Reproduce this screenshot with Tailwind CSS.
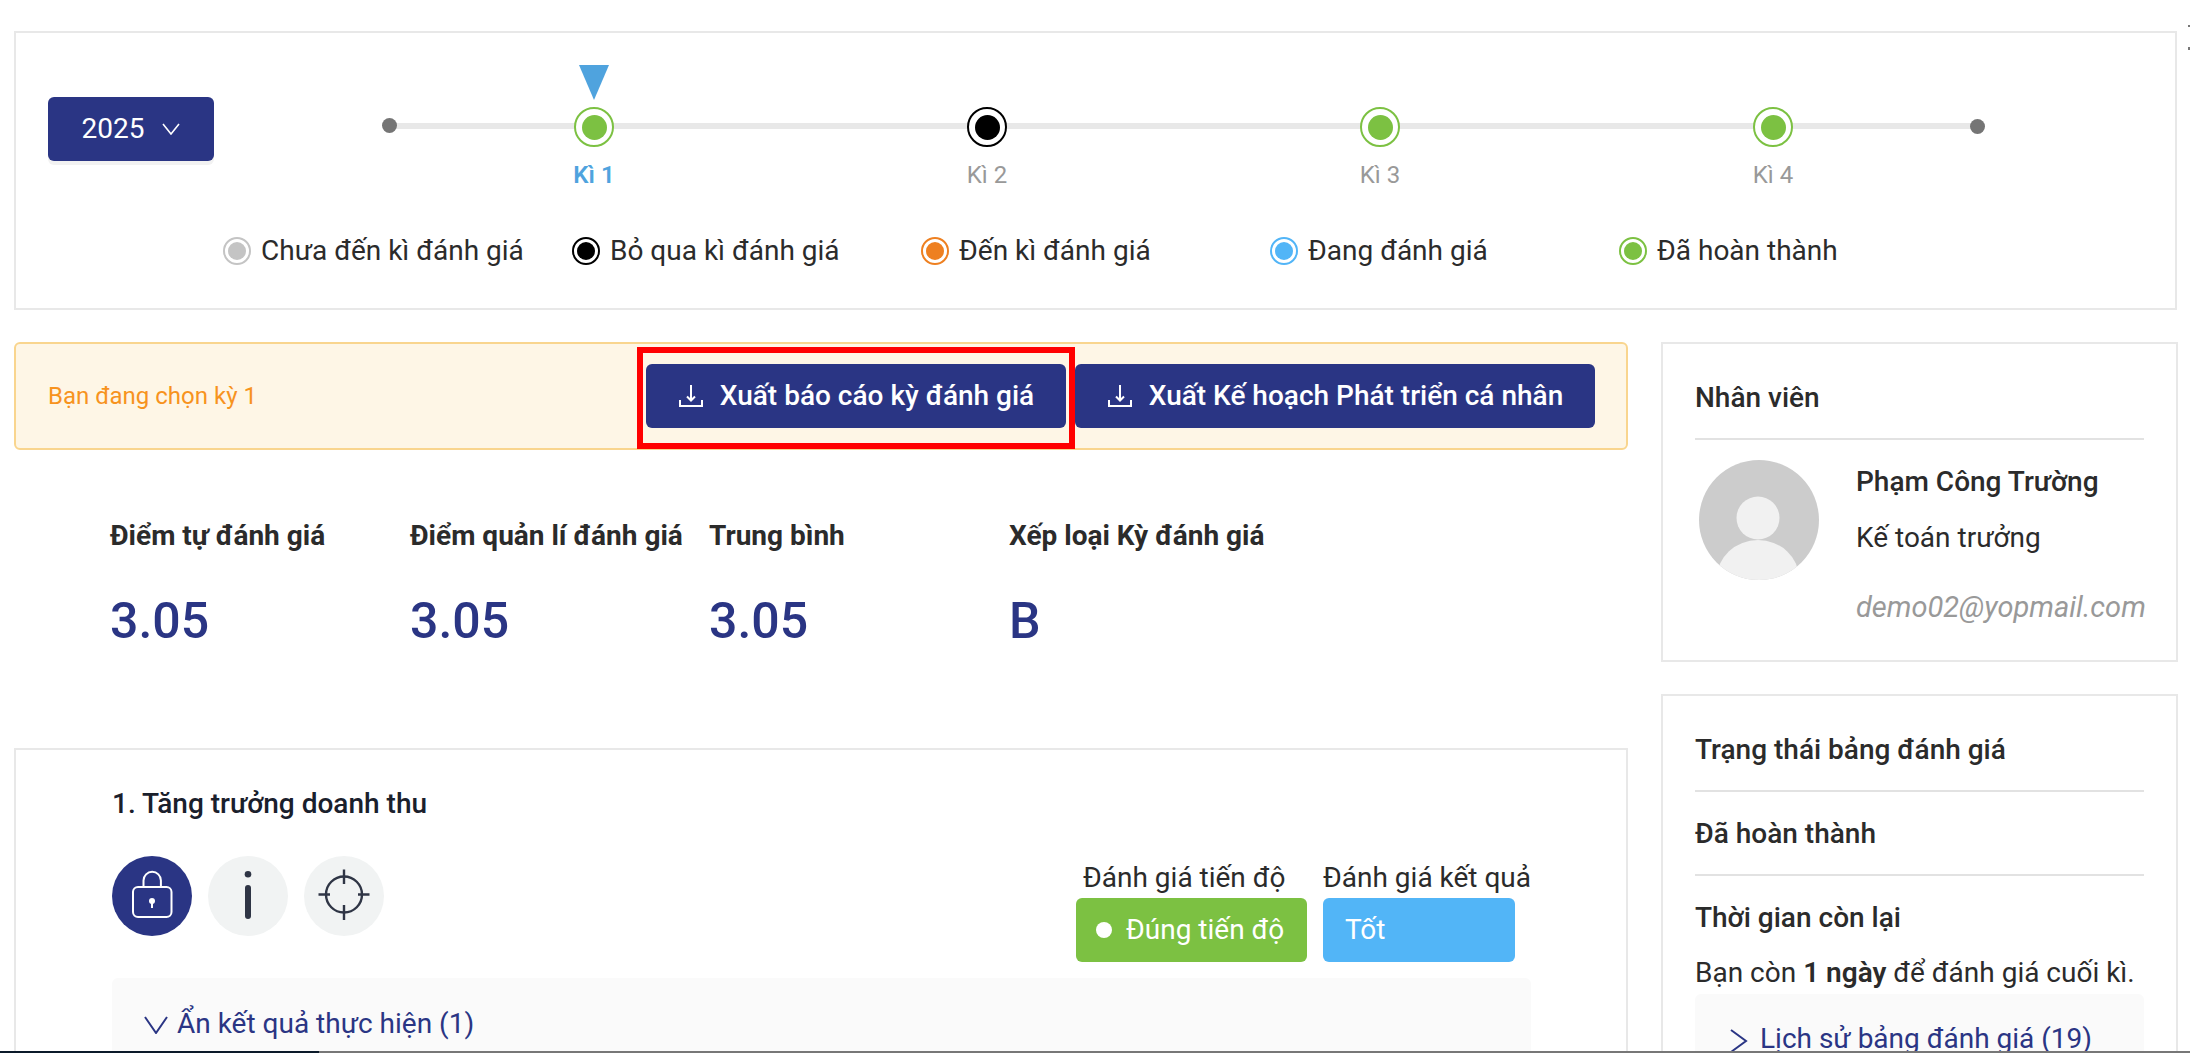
<!DOCTYPE html>
<html lang="en">
<head>
<meta charset="UTF-8">
<meta name="viewport" content="width=device-width, initial-scale=1.0">
<title>Đánh giá</title>
<script src="https://cdn.jsdelivr.net/npm/@tailwindcss/browser@4"></script>
</head>
<body class="bg-white font-['Roboto',sans-serif] text-[#2b2b2b] h-[1053px] overflow-hidden relative">

<div class="pl-[14px] pt-[31px] w-[2178px]">

    <!-- year + timeline -->
    <section class="border-2 border-[#e8e8e8] h-[279px] w-[2163px]">
        <div class="flex pt-[32px] pl-[32px] h-[161px]">
            <button class="w-[166px] h-[64px] mt-[32px] rounded-md bg-[#2a3584] text-white text-[28px] flex items-center justify-center gap-[18px] shadow-[0_4px_0_#f2f2f2]">
                2025
                <svg width="18" height="12" viewBox="0 0 18 12" fill="none" stroke="white" stroke-width="1.6"><path d="M1 1l8 10 8-10"/></svg>
            </button>
            <div class="relative flex items-start ml-[168px] mt-[42px]">
                <div class="absolute left-[4px] right-[4px] top-[16px] h-[6px] bg-[#e8e8e8]"></div>
                <span class="relative w-[15px] h-[15px] rounded-full bg-[#757575] mt-[11px]"></span>
                <div class="relative w-[40px] ml-[177px] flex flex-col items-center">
                    <span class="absolute top-[-42px] w-0 h-0 border-x-[15px] border-x-transparent border-t-[35px] border-t-[#4fa3de]"></span>
                    <span class="w-[40px] h-[40px] rounded-full border-2 border-[#7cc142] bg-white flex items-center justify-center"><span class="w-[25px] h-[25px] rounded-full bg-[#7cc142]"></span></span>
                    <span class="mt-[14px] text-[24px] leading-[28px] font-semibold text-[#4fa3de] whitespace-nowrap">Kì 1</span>
                </div>
                <div class="relative w-[40px] ml-[353px] flex flex-col items-center">
                    <span class="w-[40px] h-[40px] rounded-full border-2 border-black bg-white flex items-center justify-center"><span class="w-[25px] h-[25px] rounded-full bg-black"></span></span>
                    <span class="mt-[14px] text-[24px] leading-[28px] text-[#999999] whitespace-nowrap">Kì 2</span>
                </div>
                <div class="relative w-[40px] ml-[353px] flex flex-col items-center">
                    <span class="w-[40px] h-[40px] rounded-full border-2 border-[#7cc142] bg-white flex items-center justify-center"><span class="w-[25px] h-[25px] rounded-full bg-[#7cc142]"></span></span>
                    <span class="mt-[14px] text-[24px] leading-[28px] text-[#999999] whitespace-nowrap">Kì 3</span>
                </div>
                <div class="relative w-[40px] ml-[353px] flex flex-col items-center">
                    <span class="w-[40px] h-[40px] rounded-full border-2 border-[#7cc142] bg-white flex items-center justify-center"><span class="w-[25px] h-[25px] rounded-full bg-[#7cc142]"></span></span>
                    <span class="mt-[14px] text-[24px] leading-[28px] text-[#999999] whitespace-nowrap">Kì 4</span>
                </div>
                <span class="relative w-[15px] h-[15px] rounded-full bg-[#757575] mt-[12px] ml-[177px]"></span>
            </div>
        </div>
        <div class="flex pl-[207px] mt-[41px] text-[28px] leading-[32px]">
            <div class="w-[349px] flex items-center gap-[10px]"><span class="w-[28px] h-[28px] rounded-full border-2 border-[#c4c4c4] bg-white flex items-center justify-center"><span class="w-[18px] h-[18px] rounded-full bg-[#c4c4c4]"></span></span>Chưa đến kì đánh giá</div>
            <div class="w-[349px] flex items-center gap-[10px]"><span class="w-[28px] h-[28px] rounded-full border-2 border-black bg-white flex items-center justify-center"><span class="w-[18px] h-[18px] rounded-full bg-black"></span></span>Bỏ qua kì đánh giá</div>
            <div class="w-[349px] flex items-center gap-[10px]"><span class="w-[28px] h-[28px] rounded-full border-2 border-[#ee8021] bg-white flex items-center justify-center"><span class="w-[18px] h-[18px] rounded-full bg-[#ee8021]"></span></span>Đến kì đánh giá</div>
            <div class="w-[349px] flex items-center gap-[10px]"><span class="w-[28px] h-[28px] rounded-full border-2 border-[#52b5f7] bg-white flex items-center justify-center"><span class="w-[18px] h-[18px] rounded-full bg-[#52b5f7]"></span></span>Đang đánh giá</div>
            <div class="w-[349px] flex items-center gap-[10px]"><span class="w-[28px] h-[28px] rounded-full border-2 border-[#7cc142] bg-white flex items-center justify-center"><span class="w-[18px] h-[18px] rounded-full bg-[#7cc142]"></span></span>Đã hoàn thành</div>
        </div>
    </section>

    <div class="flex mt-[32px] items-start">
        <!-- left column -->
        <div class="w-[1614px] shrink-0">
            <div class="relative h-[108px] rounded-md border-2 border-[#f9d58e] bg-[#fef6e6] flex items-center pl-[32px]">
                <span class="text-[24px] text-[#f7931e]">Bạn đang chọn kỳ 1</span>
                <div class="absolute left-[630px] top-[20px] flex gap-[9px]">
                    <button class="w-[420px] h-[64px] rounded-md bg-[#2a3584] text-white text-[28px] font-medium flex items-center justify-center gap-[16px]">
                        <svg width="26" height="24" viewBox="0 0 26 24" fill="none" stroke="white" stroke-width="2"><path d="M2 16v6h22v-6M13 1v15M9 12.500l4 4 4-4"/></svg>
                        Xuất báo cáo kỳ đánh giá
                    </button>
                    <button class="w-[520px] h-[64px] rounded-md bg-[#2a3584] text-white text-[28px] font-medium flex items-center justify-center gap-[16px]">
                        <svg width="26" height="24" viewBox="0 0 26 24" fill="none" stroke="white" stroke-width="2"><path d="M2 16v6h22v-6M13 1v15M9 12.500l4 4 4-4"/></svg>
                        Xuất Kế hoạch Phát triển cá nhân
                    </button>
                </div>
                <span class="absolute left-[621px] top-[3px] w-[438px] h-[102px] border-[6px] border-[#ff0000]"></span>
            </div>

            <div class="grid grid-cols-[300px_299px_300px_300px] pl-[96px] mt-[70px]">
                <div><p class="text-[28px] leading-[32px] font-bold whitespace-nowrap">Điểm tự đánh giá</p><p class="mt-[41px] text-[50px] leading-[56px] font-medium text-[#2a3584]">3.05</p></div>
                <div><p class="text-[28px] leading-[32px] font-bold whitespace-nowrap">Điểm quản lí đánh giá</p><p class="mt-[41px] text-[50px] leading-[56px] font-medium text-[#2a3584]">3.05</p></div>
                <div><p class="text-[28px] leading-[32px] font-bold whitespace-nowrap">Trung bình</p><p class="mt-[41px] text-[50px] leading-[56px] font-medium text-[#2a3584]">3.05</p></div>
                <div><p class="text-[28px] leading-[32px] font-bold whitespace-nowrap">Xếp loại Kỳ đánh giá</p><p class="mt-[41px] text-[50px] leading-[56px] font-medium text-[#2a3584]">B</p></div>
            </div>

            <div class="border-2 border-[#e8e8e8] mt-[99px] h-[400px] pl-[96px] pr-[95px] pt-[38px]">
                <h3 class="text-[28px] leading-[32px] font-medium text-[#1a202c]">1. Tăng trưởng doanh thu</h3>
                <div class="flex justify-between mt-[17px] mr-[16px]">
                    <div class="flex gap-[16px] mt-[19px]">
                        <span class="w-[80px] h-[80px] rounded-full bg-[#2a3584]">
                            <svg width="80" height="80" viewBox="0 0 80 80" fill="none" stroke="white" stroke-width="2"><rect x="21" y="31" width="38.500" height="30" rx="5"/><path d="M31.500 31v-6.500a8.700 8.700 0 0 1 17.400 0V31"/><circle cx="40" cy="45" r="3" fill="white" stroke="none"/><path d="M40 46v6"/></svg>
                        </span>
                        <span class="w-[80px] h-[80px] rounded-full bg-[#f1f3f3]">
                            <svg width="80" height="80" viewBox="0 0 80 80" fill="#2f3545"><circle cx="40" cy="18.300" r="3.300"/><rect x="37" y="29" width="6" height="34" rx="3"/></svg>
                        </span>
                        <span class="w-[80px] h-[80px] rounded-full bg-[#f1f3f3]">
                            <svg width="80" height="80" viewBox="0 0 80 80" fill="none" stroke="#2f3545" stroke-width="2.400"><circle cx="40" cy="38.500" r="18"/><path d="M14.500 38.500H26M54 38.500h11.500M40 13.500V28M40 49v15"/></svg>
                        </span>
                    </div>
                    <div class="flex gap-[16px] items-start mt-[25px] text-[28px] leading-[32px]">
                        <div class="w-[231px]">
                            <p class="pl-[7px] whitespace-nowrap">Đánh giá tiến độ</p>
                            <div class="h-[64px] mt-[4px] rounded-md bg-[#7cc142] text-white flex items-center pl-[20px] gap-[14px]"><span class="w-[16px] h-[16px] rounded-full bg-white"></span>Đúng tiến độ</div>
                        </div>
                        <div class="w-[192px]">
                            <p class="whitespace-nowrap">Đánh giá kết quả</p>
                            <div class="h-[64px] mt-[4px] rounded-md bg-[#52b5f7] text-white flex items-center pl-[22px]">Tốt</div>
                        </div>
                    </div>
                </div>
                <div class="w-[1419px] h-[120px] mt-[16px] rounded-md bg-[#fafafa] pl-[32px] pt-[30px] flex items-start gap-[9px] text-[28px] leading-[32px] text-[#2a3584]">
                    <svg class="mt-[8px]" width="24" height="18" viewBox="0 0 24 18" fill="none" stroke="#2a3584" stroke-width="2"><path d="M1 1l11 16L23 1"/></svg>
                    Ẩn kết quả thực hiện (1)
                </div>
            </div>
        </div>

        <!-- right column -->
        <div class="w-[517px] ml-[33px] shrink-0">
            <div class="border-2 border-[#e8e8e8] h-[320px] px-[32px]">
                <h3 class="h-[96px] pt-[38px] text-[28px] leading-[32px] font-medium border-b-2 border-[#e2e2e2] w-[449px]">Nhân viên</h3>
                <div class="flex mt-[20px] pl-[4px]">
                    <svg width="120" height="120" viewBox="0 0 120 120" class="shrink-0"><clipPath id="av"><circle cx="60" cy="60" r="60"/></clipPath><g clip-path="url(#av)"><rect width="120" height="120" fill="#cccccc"/><circle cx="59" cy="58" r="21.500" fill="#f1f1f1"/><ellipse cx="59" cy="118" rx="41" ry="38" fill="#f1f1f1"/></g></svg>
                    <div class="ml-[37px] w-[300px]">
                        <p class="text-[28px] leading-[32px] font-medium mt-[6px]">Phạm Công Trường</p>
                        <p class="text-[28px] leading-[32px] mt-[24px]">Kế toán trưởng</p>
                        <p class="text-[29px] leading-[32px] italic text-[#999999] mt-[37px] whitespace-nowrap">demo02@yopmail.com</p>
                    </div>
                </div>
            </div>
            <div class="border-2 border-[#e8e8e8] mt-[32px] h-[400px] px-[32px] text-[28px] leading-[32px] w-[517px]">
                <div class="w-[449px]">
                    <h3 class="h-[96px] pt-[38px] font-medium border-b-2 border-[#e2e2e2]">Trạng thái bảng đánh giá</h3>
                    <h3 class="h-[84px] pt-[26px] font-medium border-b-2 border-[#e2e2e2]">Đã hoàn thành</h3>
                    <h3 class="pt-[26px] font-medium">Thời gian còn lại</h3>
                    <p class="mt-[23px] whitespace-nowrap">Bạn còn <b class="font-semibold">1 ngày</b> để đánh giá cuối kì.</p>
                    <div class="h-[120px] mt-[5px] rounded-md bg-[#fafafa] pl-[35px] pt-[29px] flex items-start gap-[12px] text-[#2a3584]">
                        <svg class="mt-[6px]" width="18" height="24" viewBox="0 0 18 24" fill="none" stroke="#2a3584" stroke-width="2"><path d="M1 1l15 11L1 23"/></svg>
                        Lịch sử bảng đánh giá (19)
                    </div>
                </div>
            </div>
        </div>
    </div>
</div>

<!-- cut-off marks at the window edge -->
<span class="absolute right-0 top-[25px] w-[2px] h-[2px] bg-[#777777]"></span>
<span class="absolute right-0 top-[47px] w-[2px] h-[3px] bg-[#777777]"></span>

<!-- window scrollbar -->
<div class="absolute left-0 right-0 bottom-0 h-[2px] bg-[#777777]"><div class="w-[319px] h-full bg-[#0b1a2a]"></div></div>

</body>
</html>
